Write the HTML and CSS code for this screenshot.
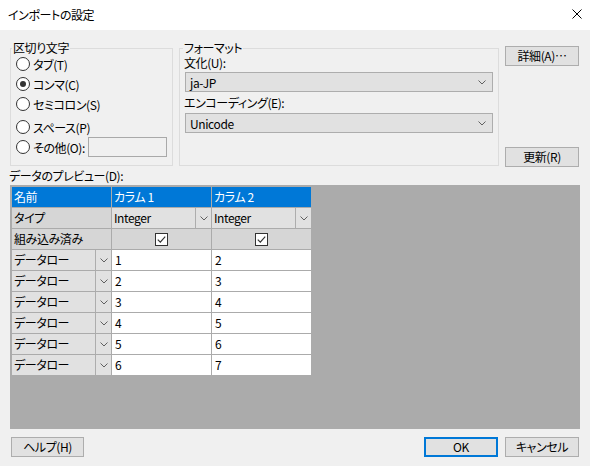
FILE: index.html
```html
<!DOCTYPE html>
<html lang="ja">
<head>
<meta charset="utf-8">
<title>インポートの設定</title>
<link rel="stylesheet" href="styles.css">
</head>
<body>
<div class="titlebar">
  <span class="title">インポートの設定</span>
  <svg class="close" width="10" height="10" viewBox="0 0 10 10"><path d="M0.5 0.5 L9.5 9.5 M9.5 0.5 L0.5 9.5" stroke="#000" stroke-width="1" fill="none"/></svg>
</div>
<div class="top">
  <fieldset class="group delim">
    <legend>区切り文字</legend>
    <div class="radio-row first"><span class="radio"></span>タブ(T)</div>
    <div class="radio-row"><span class="radio checked"></span>コンマ(C)</div>
    <div class="radio-row"><span class="radio"></span>セミコロン(S)</div>
    <div class="radio-row gap"><span class="radio"></span>スペース(P)</div>
    <div class="radio-row"><span class="radio"></span>その他(O):<span class="textbox"></span></div>
  </fieldset>
  <fieldset class="group format">
    <legend>フォーマット</legend>
    <div class="flabel">文化(U):</div>
    <div class="combo"><span>ja-JP</span><svg class="chev" width="8" height="5" viewBox="0 0 8 5"><polyline points="0.5,0.5 4,4 7.5,0.5" fill="none" stroke="#606060" stroke-width="1"/></svg></div>
    <div class="flabel second">エンコーディング(E):</div>
    <div class="combo second"><span>Unicode</span><svg class="chev" width="8" height="5" viewBox="0 0 8 5"><polyline points="0.5,0.5 4,4 7.5,0.5" fill="none" stroke="#606060" stroke-width="1"/></svg></div>
  </fieldset>
  <div class="side">
    <div class="btn">詳細(A)…</div>
    <div class="btn">更新(R)</div>
  </div>
</div>
<div class="preview-label">データのプレビュー(D):</div>
<div class="grid">
  <div class="cell hdr">名前</div>
  <div class="cell hdr">カラム 1</div>
  <div class="cell hdr">カラム 2</div>

  <div class="cell rowhdr">タイプ</div>
  <div class="cell gcombo"><span class="txt">Integer</span><span class="drop"><svg width="8" height="5" viewBox="0 0 8 5"><polyline points="0.5,0.5 4,4 7.5,0.5" fill="none" stroke="#606060" stroke-width="1"/></svg></span></div>
  <div class="cell gcombo"><span class="txt">Integer</span><span class="drop"><svg width="8" height="5" viewBox="0 0 8 5"><polyline points="0.5,0.5 4,4 7.5,0.5" fill="none" stroke="#606060" stroke-width="1"/></svg></span></div>

  <div class="cell rowhdr">組み込み済み</div>
  <div class="cell chk"><svg width="13" height="13" viewBox="0 0 13 13"><rect x="0.5" y="0.5" width="12" height="12" fill="#fff" stroke="#333"/><polyline points="2.8,6.6 5.3,9.1 10.2,3.6" fill="none" stroke="#333" stroke-width="1.2"/></svg></div>
  <div class="cell chk"><svg width="13" height="13" viewBox="0 0 13 13"><rect x="0.5" y="0.5" width="12" height="12" fill="#fff" stroke="#333"/><polyline points="2.8,6.6 5.3,9.1 10.2,3.6" fill="none" stroke="#333" stroke-width="1.2"/></svg></div>

  <div class="cell gcombo"><span class="txt">データロー</span><span class="drop"><svg width="8" height="5" viewBox="0 0 8 5"><polyline points="0.5,0.5 4,4 7.5,0.5" fill="none" stroke="#606060" stroke-width="1"/></svg></span></div>
  <div class="cell val">1</div>
  <div class="cell val">2</div>

  <div class="cell gcombo"><span class="txt">データロー</span><span class="drop"><svg width="8" height="5" viewBox="0 0 8 5"><polyline points="0.5,0.5 4,4 7.5,0.5" fill="none" stroke="#606060" stroke-width="1"/></svg></span></div>
  <div class="cell val">2</div>
  <div class="cell val">3</div>

  <div class="cell gcombo"><span class="txt">データロー</span><span class="drop"><svg width="8" height="5" viewBox="0 0 8 5"><polyline points="0.5,0.5 4,4 7.5,0.5" fill="none" stroke="#606060" stroke-width="1"/></svg></span></div>
  <div class="cell val">3</div>
  <div class="cell val">4</div>

  <div class="cell gcombo"><span class="txt">データロー</span><span class="drop"><svg width="8" height="5" viewBox="0 0 8 5"><polyline points="0.5,0.5 4,4 7.5,0.5" fill="none" stroke="#606060" stroke-width="1"/></svg></span></div>
  <div class="cell val">4</div>
  <div class="cell val">5</div>

  <div class="cell gcombo"><span class="txt">データロー</span><span class="drop"><svg width="8" height="5" viewBox="0 0 8 5"><polyline points="0.5,0.5 4,4 7.5,0.5" fill="none" stroke="#606060" stroke-width="1"/></svg></span></div>
  <div class="cell val">5</div>
  <div class="cell val">6</div>

  <div class="cell gcombo"><span class="txt">データロー</span><span class="drop"><svg width="8" height="5" viewBox="0 0 8 5"><polyline points="0.5,0.5 4,4 7.5,0.5" fill="none" stroke="#606060" stroke-width="1"/></svg></span></div>
  <div class="cell val">6</div>
  <div class="cell val">7</div>
</div>
<div class="bottom">
  <div class="btn help">ヘルプ(H)</div>
  <div class="btn ok">OK</div>
  <div class="btn cancel">キャンセル</div>
</div>
</body>
</html>
```

FILE: styles.css
```css
* { box-sizing: border-box; }
html, body { margin: 0; padding: 0; }
body {
  width: 590px;
  height: 466px;
  background: #f0f0f0;
  font-family: "Noto Sans CJK JP", "Noto Sans", sans-serif;
  font-size: 12px;
  letter-spacing: -0.4px;
  color: #000;
  font-feature-settings: "palt";
  overflow: hidden;
}
.titlebar {
  height: 30px;
  background: #fff;
  display: flex;
  align-items: center;
  justify-content: space-between;
  padding: 0 8px;
}
.title { line-height: 16px; }
.close { display: block; margin-top: -2px; }

.top {
  display: flex;
  align-items: flex-start;
  margin-top: 11px;
  padding-left: 10px;
}
.group {
  margin: 0;
  border: 1px solid #dcdcdc;
  height: 125px;
  min-width: 0;
}
.group legend { padding: 0 1px; line-height: 14px; }
.delim { width: 163px; padding: 0 5px 0 1px; margin-right: 6px; }
.format { width: 320px; padding: 0 5px 0 3px; margin-right: 6px; }

.radio-row {
  display: flex;
  align-items: center;
  height: 20px;
  padding-left: 4px;
  white-space: nowrap;
}
.radio-row.first { margin-top: -1px; }
.radio-row.gap { margin-top: 3px; }
.radio {
  width: 14px;
  height: 14px;
  border: 1px solid #333;
  border-radius: 50%;
  background: #fff;
  margin-right: 3px;
  display: flex;
  align-items: center;
  justify-content: center;
  flex: none;
}
.radio.checked::after {
  content: "";
  width: 6px;
  height: 6px;
  border-radius: 50%;
  background: #333;
}
.textbox {
  margin-left: auto;
  width: 79px;
  height: 20px;
  border: 1px solid #a9a9a9;
  background: #f0f0f0;
  flex: none;
}

.flabel { line-height: 14px; padding-left: 1px; margin-top: 1px; }
.flabel.second { margin-top: 4px; }
.combo {
  margin: 2px 0 0 2px;
  width: 308px;
  height: 20px;
  border: 1px solid #adadad;
  background: #e1e1e1;
  display: flex;
  align-items: center;
  justify-content: space-between;
  padding: 0 6px 0 4px;
}
.combo.second { margin-top: 3px; }
.chev { display: block; }

.side {
  width: 74px;
  height: 121px;
  margin-top: 5px;
  display: flex;
  flex-direction: column;
  justify-content: space-between;
}
.btn {
  height: 20px;
  border: 1px solid #adadad;
  background: #e1e1e1;
  display: flex;
  align-items: center;
  justify-content: center;
  line-height: 16px;
  white-space: nowrap;
}

.preview-label { margin-top: 1px; padding-left: 9px; line-height: 16px; }

.grid {
  margin: 1px 0 0 10px;
  width: 570px;
  height: 244px;
  background: #ababab;
  padding: 2px 0 0 2px;
  display: grid;
  grid-template-columns: repeat(3, 99px);
  grid-auto-rows: 20px;
  gap: 1px;
  align-content: start;
}
.cell { line-height: 20px; padding-left: 2px; white-space: nowrap; overflow: hidden; }
.hdr { background: #0078d7; color: #fff; }
.rowhdr { background: #d6d6d6; }
.chk { background: #d6d6d6; display: flex; align-items: center; justify-content: center; padding-left: 0; }
.chk svg { display: block; }
.val { background: #fff; padding-left: 3px; }
.gcombo { background: #e1e1e1; display: flex; padding-left: 0; }
.gcombo .txt { flex: 1; padding-left: 2px; }
.gcombo .drop {
  width: 16px;
  border-left: 1px solid #adadad;
  display: flex;
  align-items: center;
  justify-content: center;
  flex: none;
}
.gcombo .drop svg { display: block; }

.bottom { display: flex; margin-top: 8px; padding: 0 11px; }
.bottom .btn { width: 74px; }
.bottom .help { width: 73px; }
.bottom .ok { margin-left: auto; border: 2px solid #0078d7; }
.bottom .cancel { margin-left: 7px; }
```
